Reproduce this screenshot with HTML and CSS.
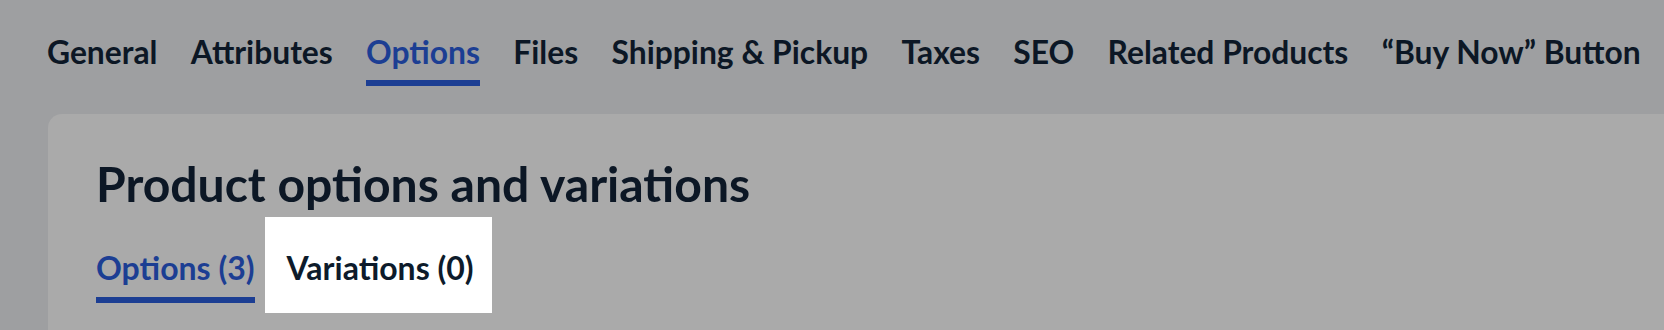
FILE: index.html
```html
<!DOCTYPE html>
<html lang="en">
<head>
<meta charset="utf-8">
<title>Product options</title>
<link rel="stylesheet" href="styles.css">
</head>
<body>
<nav class="tabs">
  <a class="tab">General</a>
  <a class="tab">Attributes</a>
  <a class="tab tab-active">Options</a>
  <a class="tab">Files</a>
  <a class="tab">Shipping &amp; Pickup</a>
  <a class="tab">Taxes</a>
  <a class="tab">SEO</a>
  <a class="tab">Related Products</a>
  <a class="tab">“Buy Now” Button</a>
</nav>
<section class="card">
  <h1 class="card-title">Product options and variations</h1>
  <div class="subtabs">
    <a class="subtab subtab-active">Options (3)</a>
    <div class="spotlight">
      <a class="subtab-plain">Variations (0)</a>
    </div>
  </div>
</section>
</body>
</html>
```

FILE: styles.css
```css
html, body {
  margin: 0;
  padding: 0;
}
body {
  width: 1664px;
  height: 330px;
  overflow: hidden;
  background: #9e9fa1;
  font-family: "Lato", "Liberation Sans", sans-serif;
  font-weight: 700;
  color: #0c1725;
}
.tabs {
  display: flex;
  gap: 33.3px;
  padding: 33px 0 0 47px;
  white-space: nowrap;
}
.tab {
  display: block;
  font-size: 31.8px;
  line-height: 38px;
  padding-bottom: 9px;
  border-bottom: 6px solid transparent;
  color: #0c1725;
}
.tab-active {
  color: #1c3e93;
  border-bottom-color: #1c3e93;
}
.card {
  margin: 28px -60px 0 48px;
  background: #aaaaaa;
  border-radius: 14px 14px 0 0;
  padding: 42px 48px 0 48px;
  height: 260px;
}
.card-title {
  margin: 0;
  font-size: 48.1px;
  line-height: 56px;
  font-weight: 700;
  color: #0c1725;
}
.subtabs {
  display: flex;
  align-items: flex-start;
  gap: 10px;
  margin-top: 5px;
}
.subtab {
  display: block;
  margin-top: 32px;
  font-size: 32px;
  line-height: 38px;
  padding-bottom: 10px;
  border-bottom: 6px solid #1c3e93;
  color: #1c3e93;
}
.spotlight {
  background: #ffffff;
  padding: 32px 18px 26px 22px;
}
.subtab-plain {
  display: block;
  font-size: 32px;
  line-height: 38px;
  color: #0d1b2b;
}
```
